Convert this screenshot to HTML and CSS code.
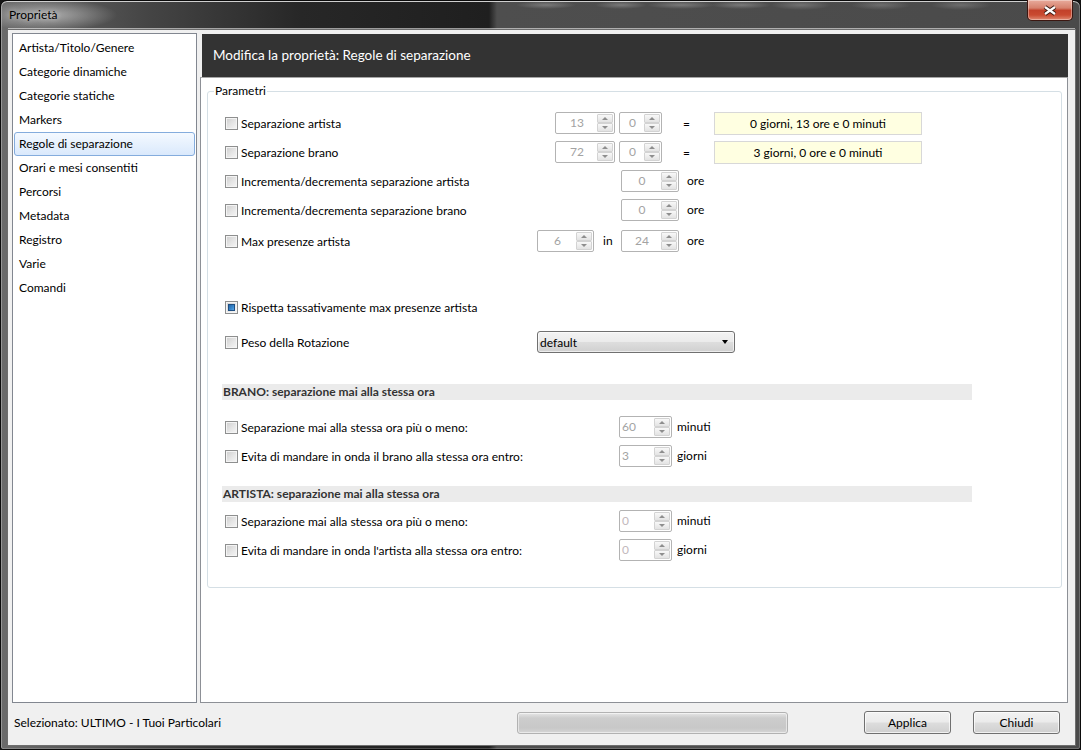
FILE: index.html
```html
<!DOCTYPE html>
<html lang="it">
<head>
<meta charset="utf-8">
<title>Proprietà</title>
<link rel="stylesheet" href="styles.css">
</head>
<body>
<div class="window">
  <div class="titlebar">
    <span class="title">Proprietà</span>
    <span class="close">
      <svg width="14" height="11" viewBox="0 0 14 11"><path d="M2 2 L12 9 M12 2 L2 9" stroke="#3a1a12" stroke-width="4.2" fill="none"/><path d="M2 2 L12 9 M12 2 L2 9" stroke="#fff" stroke-width="2.2" fill="none"/></svg>
    </span>
  </div>
  <div class="client">
    <div class="main">
      <ul class="nav">
        <li>Artista/Titolo/Genere</li>
        <li>Categorie dinamiche</li>
        <li>Categorie statiche</li>
        <li>Markers</li>
        <li class="sel">Regole di separazione</li>
        <li>Orari e mesi consentiti</li>
        <li>Percorsi</li>
        <li>Metadata</li>
        <li>Registro</li>
        <li>Varie</li>
        <li>Comandi</li>
      </ul>
      <div class="panel">
        <div class="panel-head">Modifica la proprietà: Regole di separazione</div>
        <div class="panel-body">
          <fieldset class="group">
            <legend>Parametri</legend>

            <div class="row r1">
              <label class="chk l330"><span class="box"></span>Separazione artista</label>
              <span class="spin w60"><span class="val">13</span><span class="arrows"><i class="up"></i><i class="dn"></i></span></span>
              <span class="spin w43 ml4"><span class="val">0</span><span class="arrows"><i class="up"></i><i class="dn"></i></span></span>
              <span class="eq">=</span>
              <span class="result">0 giorni, 13 ore e 0 minuti</span>
            </div>

            <div class="row r2">
              <label class="chk l330"><span class="box"></span>Separazione brano</label>
              <span class="spin w60"><span class="val">72</span><span class="arrows"><i class="up"></i><i class="dn"></i></span></span>
              <span class="spin w43 ml4"><span class="val">0</span><span class="arrows"><i class="up"></i><i class="dn"></i></span></span>
              <span class="eq">=</span>
              <span class="result">3 giorni, 0 ore e 0 minuti</span>
            </div>

            <div class="row r3">
              <label class="chk l396"><span class="box"></span>Incrementa/decrementa separazione artista</label>
              <span class="spin w58"><span class="val">0</span><span class="arrows"><i class="up"></i><i class="dn"></i></span></span>
              <span class="unit u8">ore</span>
            </div>

            <div class="row r4">
              <label class="chk l396"><span class="box"></span>Incrementa/decrementa separazione brano</label>
              <span class="spin w58"><span class="val">0</span><span class="arrows"><i class="up"></i><i class="dn"></i></span></span>
              <span class="unit u8">ore</span>
            </div>

            <div class="row r5">
              <label class="chk l312"><span class="box"></span>Max presenze artista</label>
              <span class="spin w57"><span class="val">6</span><span class="arrows"><i class="up"></i><i class="dn"></i></span></span>
              <span class="in">in</span>
              <span class="spin w58"><span class="val">24</span><span class="arrows"><i class="up"></i><i class="dn"></i></span></span>
              <span class="unit u8">ore</span>
            </div>

            <div class="row r6">
              <label class="chk"><span class="box on"></span>Rispetta tassativamente max presenze artista</label>
            </div>

            <div class="row r7">
              <label class="chk l312"><span class="box"></span>Peso della Rotazione</label>
              <span class="combo"><span class="combo-text">default</span><span class="caret"></span></span>
            </div>

            <div class="section s1">BRANO: separazione mai alla stessa ora</div>

            <div class="row r8">
              <label class="chk l394"><span class="box"></span>Separazione mai alla stessa ora più o meno:</label>
              <span class="spin w53 left"><span class="val">60</span><span class="arrows"><i class="up"></i><i class="dn"></i></span></span>
              <span class="unit u5">minuti</span>
            </div>

            <div class="row r9">
              <label class="chk l394"><span class="box"></span>Evita di mandare in onda il brano alla stessa ora entro:</label>
              <span class="spin w53 left"><span class="val">3</span><span class="arrows"><i class="up"></i><i class="dn"></i></span></span>
              <span class="unit u5">giorni</span>
            </div>

            <div class="section s2">ARTISTA: separazione mai alla stessa ora</div>

            <div class="row r10">
              <label class="chk l394"><span class="box"></span>Separazione mai alla stessa ora più o meno:</label>
              <span class="spin w53 left light"><span class="val">0</span><span class="arrows"><i class="up"></i><i class="dn"></i></span></span>
              <span class="unit u5">minuti</span>
            </div>

            <div class="row r11">
              <label class="chk l394"><span class="box"></span>Evita di mandare in onda l'artista alla stessa ora entro:</label>
              <span class="spin w53 left light"><span class="val">0</span><span class="arrows"><i class="up"></i><i class="dn"></i></span></span>
              <span class="unit u5">giorni</span>
            </div>
          </fieldset>
        </div>
      </div>
    </div>
    <div class="status">
      <span class="status-text">Selezionato: ULTIMO - I Tuoi Particolari</span>
      <span class="progress"></span>
      <button class="btn apply">Applica</button>
      <button class="btn close-btn">Chiudi</button>
    </div>
  </div>
</div>
</body>
</html>
```

FILE: styles.css
```css
* { box-sizing: border-box; }
html, body { margin: 0; padding: 0; }
body {
  width: 1081px;
  height: 750px;
  overflow: hidden;
  background: #151515;
  font-family: Lato, "Noto Sans", "DejaVu Sans", sans-serif;
  font-size: 12px;
  color: #000;
}

.window {
  width: 1081px;
  height: 750px;
  display: flex;
  flex-direction: column;
  border: 1px solid #0b0b0b;
  border-radius: 7px 7px 3px 3px;
  padding: 0 5px 4px 7px;
  background:
    radial-gradient(ellipse 70px 16px at 46px 14px, rgba(200,200,200,0.75), rgba(200,200,200,0) 100%),
    radial-gradient(ellipse 30px 4px at 545px 4px, rgba(150,150,150,0.6), rgba(150,150,150,0) 100%),
    radial-gradient(ellipse 26px 4px at 620px 4px, rgba(150,150,150,0.6), rgba(150,150,150,0) 100%),
    radial-gradient(ellipse 34px 4px at 680px 4px, rgba(150,150,150,0.6), rgba(150,150,150,0) 100%),
    radial-gradient(ellipse 30px 4px at 740px 4px, rgba(150,150,150,0.6), rgba(150,150,150,0) 100%),
    radial-gradient(ellipse 30px 5px at 800px 4px, rgba(150,150,150,0.5), rgba(150,150,150,0) 100%),
    radial-gradient(ellipse 30px 5px at 880px 4px, rgba(150,150,150,0.45), rgba(150,150,150,0) 100%),
    radial-gradient(ellipse 30px 5px at 960px 4px, rgba(150,150,150,0.45), rgba(150,150,150,0) 100%),
    linear-gradient(90deg, #6b6b6b 0, #444 150px, #272727 300px, #1f1f1f 488px, #4e4e4e 496px, #4a4a4a 100%);
  box-shadow: inset 0 1px 0 #cfcfcf, inset 1px 0 0 rgba(255,255,255,0.3), inset -1px 0 0 rgba(255,255,255,0.2), inset 0 -1px 0 rgba(255,255,255,0.2);
}

.titlebar {
  height: 29px;
  display: flex;
  align-items: flex-start;
  justify-content: space-between;
}
.title {
  padding: 7px 0 0 1px;
  font-size: 12px;
  line-height: 14px;
  color: #000;
  text-shadow: 0 0 6px rgba(255,255,255,0.6);
}
.close {
  width: 46px;
  height: 21px;
  margin: -1px 2px 0 0;
  display: flex;
  align-items: center;
  justify-content: center;
  border: 1px solid #3c1711;
  border-top: none;
  border-radius: 0 0 5px 5px;
  background: linear-gradient(#e8ab9c 0%, #d6816d 40%, #c2412a 52%, #c94a30 75%, #e08a72 100%);
  box-shadow: inset 0 0 0 1px rgba(255,255,255,0.35);
}

.client {
  flex: 1;
  display: flex;
  flex-direction: column;
  background: #f0f0f0;
  box-shadow: 0 0 0 1px #6e6e6e, 0 -2px 0 0 rgba(255,255,255,0.55);
}

.main {
  height: 673px;
  display: flex;
  gap: 3px;
  padding: 3px 0 0 4px;
}

.nav {
  list-style: none;
  margin: 0;
  padding: 2px 1px 0;
  width: 185px;
  height: 670px;
  background: #fff;
  border: 1px solid #828790;
}
.nav li {
  height: 24px;
  line-height: 22px;
  padding-left: 4px;
  border: 1px solid transparent;
  border-radius: 3px;
}
.nav li.sel {
  border-color: #84acdd;
  background: linear-gradient(#f4f9ff, #dae9fc);
}

.panel {
  width: 868px;
  height: 670px;
  display: flex;
  flex-direction: column;
}
.panel-head {
  height: 43px;
  margin: 1px 0 0 2px;
  background: #333333;
  color: #fff;
  font-size: 13.5px;
  display: flex;
  align-items: center;
  padding-left: 11px;
  padding-bottom: 1px;
}
.panel-body {
  flex: 1;
  background: #fff;
  border: 1px solid #8d9096;
  border-top-color: #a6a6a6;
  padding: 5px 0 0 6px;
}

.group {
  width: 855px;
  margin: 0;
  padding: 13px 0 26px 14px;
  border: 1px solid #d5dfe5;
  border-radius: 3px;
}
.group legend {
  padding: 0 1px;
  margin-left: -8px;
  line-height: 16px;
}

.row {
  display: flex;
  align-items: center;
  height: 22px;
  margin-left: 3px;
}
.r2, .r3, .r4, .r9, .r11 { margin-top: 7px; }
.r5 { margin-top: 9px; }
.r6 { margin-top: 44px; }
.r7 { margin-top: 13px; }
.r8 { margin-top: 16px; }
.r10 { margin-top: 8px; }

.chk {
  display: flex;
  align-items: center;
  gap: 3px;
  flex: none;
  white-space: nowrap;
}
.l330 { width: 330px; }
.l396 { width: 396px; }
.l312 { width: 312px; }
.l394 { width: 394px; }

.box {
  position: relative;
  width: 13px;
  height: 13px;
  flex: none;
  border: 1px solid #8e8f8f;
  background: linear-gradient(135deg, #cdcdcd 0%, #e6e6e6 55%, #f6f6f6 100%);
  box-shadow: inset 0 0 0 1px #f4f4f4;
}
.box.on::after {
  content: "";
  position: absolute;
  left: 2px;
  top: 2px;
  width: 7px;
  height: 7px;
  background: linear-gradient(135deg, #1c5a9a 0%, #3b8bd0 60%, #6ab4ee 100%);
  box-shadow: 0 0 0 1px #1f4f83 inset;
}

.spin {
  display: flex;
  flex: none;
  height: 22px;
  padding: 1px;
  border: 1px solid #b3b3b3;
  border-radius: 2px;
  background: #fff;
}
.spin .val {
  flex: 1;
  color: #a3a3a3;
  text-align: center;
  line-height: 18px;
}
.spin.left .val { text-align: left; padding-left: 1px; }
.spin.light .val { color: #c2b8bc; }
.arrows {
  width: 16px;
  display: flex;
  flex-direction: column;
}
.arrows i {
  flex: 1;
  display: flex;
  align-items: center;
  justify-content: center;
  border: 1px solid #d3d3d3;
  border-radius: 1px;
  background: linear-gradient(#f8f8f8, #e3e3e3);
}
.arrows i::before {
  content: "";
  border-left: 3px solid transparent;
  border-right: 3px solid transparent;
  border-bottom: 3px solid #8e8e8e;
}
.arrows i.dn::before {
  border-bottom: 0;
  border-top: 3px solid #8e8e8e;
}
.w60 { width: 60px; }
.w43 { width: 43px; }
.w58 { width: 58px; }
.w57 { width: 57px; }
.w53 { width: 53px; }
.ml4 { margin-left: 4px; }

.eq { margin-left: 21px; width: 9px; }
.result {
  margin-left: 22px;
  width: 208px;
  height: 23px;
  border: 1px solid #d8d8d8;
  background: #ffffe1;
  text-align: center;
  line-height: 21px;
}
.unit { flex: none; padding-bottom: 2px; }
.u8 { margin-left: 8px; }
.u5 { margin-left: 5px; }
.in { margin-left: 9px; width: 18px; padding-bottom: 2px; }

.combo {
  width: 198px;
  height: 22px;
  display: flex;
  align-items: center;
  justify-content: space-between;
  border: 1px solid #707070;
  border-radius: 3px;
  padding: 0 6px 0 2px;
  background: linear-gradient(#f3f3f3 0%, #ebebeb 48%, #dddddd 52%, #d0d0d0 100%);
  box-shadow: inset 0 0 0 1px rgba(255,255,255,0.6);
}
.caret {
  border-left: 3.5px solid transparent;
  border-right: 3.5px solid transparent;
  border-top: 4px solid #000;
}

.section {
  width: 750px;
  height: 16px;
  padding-left: 1px;
  background: #ebebeb;
  font-weight: bold;
  color: #333;
  line-height: 16px;
}
.s1 { margin-top: 31px; }
.s2 { margin-top: 19px; }

.status {
  flex: 1;
  display: flex;
  align-items: flex-start;
  padding: 8px 0 0 6px;
}
.status-text {
  width: 503px;
  line-height: 22px;
  padding-top: 1px;
}
.progress {
  width: 271px;
  height: 22px;
  margin-top: 1px;
  border: 1px solid #b2b2b2;
  border-radius: 3px;
  background: linear-gradient(#e6e6e6 0%, #cdcdcd 25%, #c8c8c8 75%, #d6d6d6 100%);
  box-shadow: inset 0 0 0 1px rgba(255,255,255,0.5);
}
.btn {
  width: 87px;
  height: 23px;
  padding: 0;
  font: inherit;
  color: #000;
  border: 1px solid #707070;
  border-radius: 3px;
  background: linear-gradient(#f2f2f2 0%, #ebebeb 48%, #dddddd 52%, #cfcfcf 100%);
  box-shadow: inset 0 0 0 1px rgba(255,255,255,0.7);
}
.apply { margin-left: 76px; }
.close-btn { margin-left: 22px; }
```
